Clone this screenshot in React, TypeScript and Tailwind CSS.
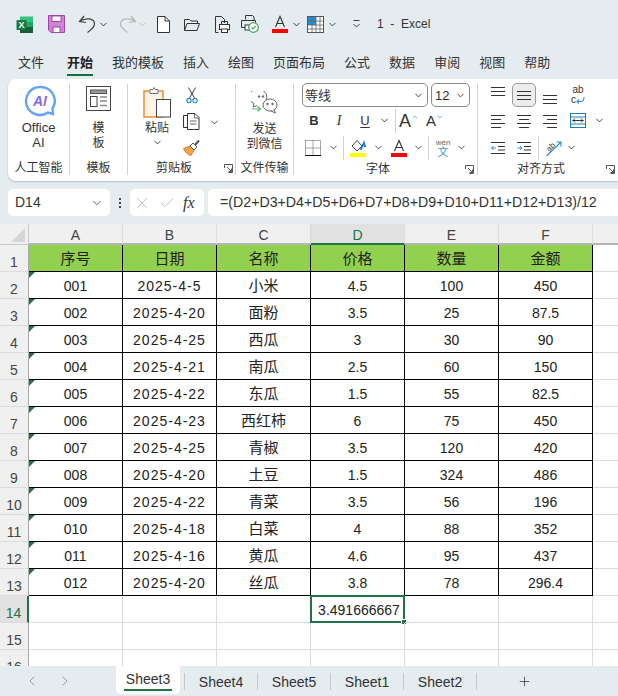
import React from 'react'
import { ChevronDown, ChevronLeft, ChevronRight, Plus, X, Check } from 'lucide-react'

const rows = [
  ['001', '2025-4-5', '小米', '4.5', '100', '450'],
  ['002', '2025-4-20', '面粉', '3.5', '25', '87.5'],
  ['003', '2025-4-25', '西瓜', '3', '30', '90'],
  ['004', '2025-4-21', '南瓜', '2.5', '60', '150'],
  ['005', '2025-4-22', '东瓜', '1.5', '55', '82.5'],
  ['006', '2025-4-23', '西红柿', '6', '75', '450'],
  ['007', '2025-4-25', '青椒', '3.5', '120', '420'],
  ['008', '2025-4-20', '土豆', '1.5', '324', '486'],
  ['009', '2025-4-22', '青菜', '3.5', '56', '196'],
  ['010', '2025-4-18', '白菜', '4', '88', '352'],
  ['011', '2025-4-16', '黄瓜', '4.6', '95', '437'],
  ['012', '2025-4-20', '丝瓜', '3.8', '78', '296.4'],
]
const heads = ['序号', '日期', '名称', '价格', '数量', '金额']
const tabs = ['开始', '我的模板', '插入', '绘图', '页面布局', '公式', '数据', '审阅', '视图', '帮助']

const Chev = ({ className = 'text-[#333]' }: { className?: string }) => (
  <ChevronDown size={11} strokeWidth={2} className={`shrink-0 ${className}`} />
)
const Sep = ({ className = 'h-[24px]' }: { className?: string }) => <div className={`w-px shrink-0 bg-[#d0d0d0] ${className}`} />
const Slot = ({ className, children }: { className: string; children?: React.ReactNode }) => (
  <div className={`flex h-full shrink-0 items-center justify-center ${className}`}>{children}</div>
)
const Divider = () => <div className="my-[5px] mb-[6px] w-px shrink-0 bg-[#d2d2d2]" />

const Launcher = () => (
  <svg width="9" height="9" viewBox="0 0 9 9" fill="none" stroke="#555" className="shrink-0">
    <path d="M.5 4V.5H8.5V8.5H4.5" />
    <path d="M3 3L7.5 7.5M7.5 4.5V7.5H4.5" />
  </svg>
)

const Lines = ({ ws, ys }: { ws: [number, number][]; ys: number[] }) => (
  <svg width="16" height="16" viewBox="0 0 16 16" stroke="#333" fill="none">
    {ys.map((y, i) => (
      <path key={i} d={`M${ws[i][0]} ${y + 0.5}H${ws[i][1]}`} />
    ))}
  </svg>
)

function TitleBar() {
  return (
    <div className="flex h-[45px] items-center pt-[3px]">
      <Slot className="ml-[15px] w-[18px]">
        <svg width="17" height="17" viewBox="0 0 17 17">
          <rect x="4" y="0.5" width="13" height="6" fill="#33c481" />
          <rect x="4" y="6" width="13" height="5.5" fill="#21a366" />
          <rect x="4" y="11" width="13" height="6" fill="#185c37" />
          <rect x="0.5" y="4" width="10" height="10" rx="1" fill="#107c41" />
          <text x="5.5" y="12" textAnchor="middle" fontSize="9" fontWeight="700" fill="#fff" fontFamily="Liberation Sans">X</text>
        </svg>
      </Slot>
      <Slot className="ml-[14px] w-[18px]">
        <svg width="17" height="18" viewBox="0 0 17 18">
          <path d="M.5.5H16.5V17.5H3L.5 15Z" fill="#cd84d4" stroke="#a144ad" />
          <rect x="4" y="1" width="9" height="5.5" fill="#fff" stroke="#a144ad" />
          <rect x="5" y="12" width="7" height="5.5" fill="#fff" stroke="#a144ad" />
        </svg>
      </Slot>
      <Slot className="ml-[13px] w-[20px]">
        <svg width="20" height="18" viewBox="0 0 20 18" fill="none" stroke="#444" strokeWidth="1.2">
          <path d="M6 1L1.5 6.5L8 7.5" />
          <path d="M1.5 6.5C7 2.5 16 3 16.5 8.5C16.8 12 13 15 9.5 17.5" />
        </svg>
      </Slot>
      <Slot className="ml-[0px] w-[10px]"><Chev /></Slot>
      <Slot className="ml-[9px] w-[20px]">
        <svg width="20" height="18" viewBox="0 0 20 18" fill="none" stroke="#b5b5b5" strokeWidth="1.2">
          <path d="M14 1L18.5 6.5L12 7.5" />
          <path d="M18.5 6.5C13 2.5 4 3 3.5 8.5C3.2 12 7 15 10.5 17.5" />
        </svg>
      </Slot>
      <Slot className="w-[10px]"><Chev className="text-[#bbb]" /></Slot>
      <Slot className="ml-[9px] w-[14px]">
        <svg width="13" height="17" viewBox="0 0 13 17" fill="#fff" stroke="#333">
          <path d="M.5.5H8L12.5 5V16.5H.5Z" />
          <path d="M8 .5V5H12.5" fill="none" />
        </svg>
      </Slot>
      <Slot className="ml-[13px] w-[17px]">
        <svg width="16" height="13" viewBox="0 0 16 13" fill="none" stroke="#333">
          <path d="M.5 12.5V1.5H5.5L7 3H13.5V5.5" />
          <path d="M.5 12.5L3 5.5H15.5L13 12.5Z" />
        </svg>
      </Slot>
      <Slot className="ml-[14px] w-[16px]">
        <svg width="15" height="17" viewBox="0 0 15 17" fill="none" stroke="#333">
          <path d="M.5 16.5V.5H6.5L9.5 3.5V7" />
          <path d="M3.5 16.5H.5" />
          <rect x="4.5" y="8.5" width="10" height="5" fill="#fff" />
          <rect x="6.5" y="13" width="6" height="3.5" fill="#fff" />
          <path d="M6.5 8.5V5.5H12.5V8.5" />
        </svg>
      </Slot>
      <Slot className="ml-[11px] w-[18px]">
        <svg width="18" height="18" viewBox="0 0 18 18" fill="none" stroke="#333">
          <path d="M4.5 4.5V.5H11.5L13 2V5" />
          <path d="M8 12.5H.5V5.5H14.5V7.5" />
          <rect x="4" y="10" width="5" height="5" fill="#fff" />
          <circle cx="12.5" cy="12.5" r="4.8" fill="#fff" stroke="#4aa564" strokeWidth="1.3" />
          <path d="M10.5 12.5L12 14L14.7 11" stroke="#4aa564" strokeWidth="1.2" />
        </svg>
      </Slot>
      <Slot className="ml-[13px] w-[16px]">
        <svg width="16" height="18" viewBox="0 0 16 18" fill="none">
          <path d="M3.5 12L8 1.5L12.5 12M5 8.5H11" stroke="#333" strokeWidth="1.1" />
          <rect y="14" width="16" height="4" fill="#f00" />
        </svg>
      </Slot>
      <Slot className="ml-[3px] w-[10px]"><Chev /></Slot>
      <Slot className="ml-[6px] w-[17px]">
        <svg width="17" height="17" viewBox="0 0 17 17" fill="none">
          <rect x="0.5" y="0.5" width="16" height="16" fill="#fff" stroke="#555" />
          <rect x="1" y="1" width="8" height="8" fill="#1e8fdc" />
          <path d="M1 5H16M1 9H16M1 13H16M5 1V16M9 1V16M13 1V16" stroke="#666" strokeWidth="0.8" />
        </svg>
      </Slot>
      <Slot className="ml-[3px] w-[10px]"><Chev /></Slot>
      <Slot className="ml-[13px] w-[12px]">
        <svg width="9" height="8" viewBox="0 0 9 8" fill="none" stroke="#444">
          <path d="M1.5 .5H7.5M1.5 4L4.5 7L7.5 4" />
        </svg>
      </Slot>
      <span className="ml-[15px] whitespace-pre text-[12px] text-[#333]">1  -  Excel</span>
    </div>
  )
}

function TabBar() {
  return (
    <div className="flex h-[34px] pl-[18px] text-[13px] text-[#333]">
      <div className="mt-[4px] flex h-[27px] flex-col justify-center border-b-[2px] border-transparent pt-[2px]">文件</div>
      <div className="ml-[23px] flex gap-[19px]">
        {tabs.map((t) => (
          <div key={t} className={`mt-[4px] flex h-[27px] flex-col justify-center pt-[2px] ${t === '开始' ? 'border-b-[2px] border-[#116f3f] font-bold text-[#222]' : 'border-b-[2px] border-transparent'}`}>
            {t}
          </div>
        ))}
      </div>
    </div>
  )
}

const GroupLabel = ({ children }: { children: React.ReactNode }) => (
  <div className="flex h-[17px] items-center justify-center text-[12px] text-[#333]">{children}</div>
)

function Ribbon() {
  return (
    <div className="ml-[8px] flex h-[102px] rounded-l-[8px] bg-white text-[12px] leading-[15px] text-[#333] shadow-[0_1px_2px_rgba(0,0,0,0.2)]">
      <div className="flex w-[61px] shrink-0 flex-col">
        <div className="flex h-[81px] flex-col items-center pt-[6px]">
          <svg width="32" height="33" viewBox="0 0 32 33" fill="none" className="ml-[3px]">
            <defs>
              <linearGradient id="ai" x1="0" y1="0" x2="1" y2="1">
                <stop offset="0" stopColor="#4f7cff" />
                <stop offset="0.6" stopColor="#8a63e8" />
                <stop offset="1" stopColor="#f2a63c" />
              </linearGradient>
            </defs>
            <path d="M16 2A14 14 0 1 0 24 27.5L29 29L28.5 23.5A14 14 0 0 0 16 2Z" stroke="#64a4f4" strokeWidth="2.4" />
            <text x="16" y="21" textAnchor="middle" fontSize="14" fontWeight="700" fontStyle="italic" fill="url(#ai)" fontFamily="Liberation Sans">AI</text>
          </svg>
          <div className="mt-[2px] text-center text-[13px]">Office<br />AI</div>
        </div>
        <GroupLabel>人工智能</GroupLabel>
      </div>
      <Divider />
      <div className="flex w-[57px] shrink-0 flex-col">
        <div className="flex h-[81px] flex-col items-center pt-[7px]">
          <svg width="25" height="25" viewBox="0 0 25 25" fill="none" stroke="#444">
            <rect x="0.5" y="0.5" width="24" height="24" />
            <rect x="4.5" y="4" width="16" height="3.5" fill="#999" stroke="#555" />
            <rect x="4.5" y="10.5" width="6.5" height="10" />
            <path d="M14 11H21M14 15H21M14 19.5H21" stroke="#888" strokeWidth="1.5" />
          </svg>
          <div className="mt-[10px] text-center">模<br />板</div>
        </div>
        <GroupLabel>模板</GroupLabel>
      </div>
      <Divider />
      <div className="flex w-[107px] shrink-0 flex-col">
        <div className="flex h-[81px]">
          <div className="ml-[13px] flex w-[32px] flex-col items-center pt-[8px]">
            <svg width="29" height="31" viewBox="0 0 29 31" fill="none">
              <rect x="1" y="4" width="19" height="26" fill="#fdf3e6" stroke="#ee8c2c" strokeWidth="1.5" />
              <path d="M7 4.5V2.5H10L11 .5L12 2.5H15V6.5H7Z" fill="#fff" stroke="#777" />
              <rect x="13.5" y="12.5" width="14" height="17.5" fill="#fff" stroke="#444" />
            </svg>
            <div className="mt-[3px] whitespace-nowrap">粘贴</div>
            <div className="mt-[1px]"><Chev /></div>
          </div>
          <div className="ml-[10px] flex flex-col items-center pt-[8px]">
            <svg width="12" height="17" viewBox="0 0 12 17" fill="none" stroke="#444">
              <path d="M2.5 .5L8.5 11M9.5 .5L3.5 11" />
              <circle cx="3" cy="13.5" r="2.2" stroke="#2c8fd8" strokeWidth="1.2" />
              <circle cx="9" cy="13.5" r="2.2" stroke="#2c8fd8" strokeWidth="1.2" />
            </svg>
            <svg width="17" height="17" viewBox="0 0 17 17" fill="none" stroke="#333" className="mt-[9px]">
              <path d="M4.5 2.5H.5V14.5H4.5" />
              <path d="M4.5 .5H12L16 4.5V16.5H4.5Z" fill="#fff" />
              <path d="M7 8H13.5M7 11H13.5M11.5 .5V5H16" stroke="#666" />
            </svg>
            <svg width="17" height="17" viewBox="0 0 17 17" fill="none" className="mt-[9px]">
              <path d="M.5 9.5L7 7L11 11L8 16.5C5 16 2 13 .5 9.5Z" fill="#f5a24e" stroke="#e07c20" />
              <path d="M7 7L10 4L14 8L11 11Z" fill="#fff" stroke="#555" />
              <path d="M12 6L16 1.5" stroke="#555" strokeWidth="2" />
            </svg>
          </div>
          <div className="ml-[9px] mt-[38px]"><Chev /></div>
        </div>
        <div className="flex h-[17px] items-center pl-[28px] pr-[2px] text-[12px]">
          <span>剪贴板</span>
          <span className="ml-auto"><Launcher /></span>
        </div>
      </div>
      <Divider />
      <div className="flex w-[57px] shrink-0 flex-col">
        <div className="flex h-[81px] flex-col items-center pt-[12px]">
          <svg width="27" height="23" viewBox="0 0 27 23" fill="none" stroke="#666">
            <path d="M3 12.5A9 7.5 0 1 1 15 9" />
            <path d="M3 12.5L2 16L6 14.5" />
            <circle cx="8" cy="5.5" r="0.8" fill="#555" />
            <circle cx="12" cy="5.5" r="0.8" fill="#555" />
            <ellipse cx="19" cy="14" rx="7" ry="6" fill="#fff" />
            <path d="M23 19L24.5 22L20 20" fill="#fff" />
            <circle cx="16.5" cy="13" r="0.8" fill="#555" />
            <circle cx="21.5" cy="13" r="0.8" fill="#555" />
            <path d="M1 18H9M6.5 15.5L9.5 18L6.5 20.5" stroke="#5cb57a" strokeWidth="1.2" />
          </svg>
          <div className="mt-[8px] text-center whitespace-nowrap">发送<br />到微信</div>
        </div>
        <GroupLabel>文件传输</GroupLabel>
      </div>
      <Divider />
      <FontGroup />
      <Divider />
      <AlignGroup />
    </div>
  )
}

function FontGroup() {
  return (
    <div className="flex w-[183px] shrink-0 flex-col pl-[8px]">
      <div className="mt-[4px] flex h-[24px] gap-[3px]">
        <div className="flex w-[126px] items-center justify-between rounded-[5px] border border-[#8a8a8a] pl-[2px] pr-[3px] text-[13px]">
          等线 <Chev />
        </div>
        <div className="flex w-[39px] items-center justify-between rounded-[5px] border border-[#8a8a8a] pl-[3px] pr-[3px] text-[13px]">
          12 <Chev />
        </div>
      </div>
      <div className="flex h-[27px] items-center">
        <Slot className="w-[24px] text-[13px] font-bold">B</Slot>
        <Slot className="w-[26px] font-['Liberation_Serif'] text-[14px] italic">I</Slot>
        <Slot className="w-[26px] text-[13px] underline underline-offset-2">U</Slot>
        <Slot className="w-[12px]"><Chev /></Slot>
        <Sep className="ml-[5px] h-[24px]" />
        <Slot className="w-[26px]">
          <span className="text-[18px] leading-none text-[#333]">A</span>
          <ChevronDown size={8} strokeWidth={2} className="mb-[8px] rotate-180 text-[#2c8fd8]" />
        </Slot>
        <Slot className="w-[26px]">
          <span className="text-[15px] leading-none">A</span>
          <ChevronDown size={8} strokeWidth={2} className="mb-[8px] text-[#2c8fd8]" />
        </Slot>
      </div>
      <div className="flex h-[27px] items-center">
        <Slot className="w-[22px]">
          <svg width="16" height="16" viewBox="0 0 16 16" fill="none">
            <path d="M.5 .5H15.5V15.5M.5 .5V15.5M8 .5V15.5M.5 8H15.5" stroke="#555" strokeDasharray="1 1" />
            <path d="M0 15.5H16" stroke="#111" />
          </svg>
        </Slot>
        <Slot className="w-[19px]"><Chev /></Slot>
        <Sep />
        <Slot className="w-[28px]">
          <svg width="17" height="18" viewBox="0 0 17 18" fill="none">
            <path d="M2 7L7 1.5L12 7L7 12Z" stroke="#444" />
            <path d="M11 11C11 8 13 6 14 4L15 8" stroke="#1e7fcc" strokeWidth="2" />
            <rect y="14" width="16" height="4" fill="#ff0" />
          </svg>
        </Slot>
        <Slot className="w-[12px]"><Chev /></Slot>
        <Slot className="w-[30px]">
          <svg width="16" height="18" viewBox="0 0 16 18" fill="none">
            <path d="M3.5 12L8 1.5L12.5 12M5 8.5H11" stroke="#333" strokeWidth="1.1" />
            <rect y="14" width="16" height="4" fill="#f00" />
          </svg>
        </Slot>
        <Slot className="w-[8px]"><Chev /></Slot>
        <Sep className="ml-[6px] h-[24px]" />
        <Slot className="w-[28px] flex-col">
          <span className="text-[8px] leading-[9px] text-[#666]">wén</span>
          <span className="text-[11px] leading-[11px] text-[#3a9ad9]">文</span>
        </Slot>
        <Slot className="w-[8px]"><Chev /></Slot>
      </div>
      <div className="flex h-[17px] items-center pr-[3px] text-[12px]">
        <span className="ml-[64px]">字体</span>
        <span className="ml-auto"><Launcher /></span>
      </div>
    </div>
  )
}

function AlignGroup() {
  const left: [number, number][] = [[1, 15], [1, 11], [1, 15], [1, 11]]
  const center: [number, number][] = [[1, 15], [3, 13], [1, 15], [3, 13]]
  const right: [number, number][] = [[1, 15], [5, 15], [1, 15], [5, 15]]
  const three: [number, number][] = [[1, 15], [1, 15], [1, 15]]
  return (
    <div className="flex flex-1 flex-col pl-[6px]">
      <div className="mt-[4px] flex h-[24px] items-center">
        <Slot className="w-[28px] items-start pt-[1px]"><Lines ws={three} ys={[3, 7, 11]} /></Slot>
        <div className="flex h-[24px] w-[24px] shrink-0 items-center justify-center rounded-[5px] border border-[#9a9a9a] bg-[#ececec]">
          <Lines ws={three} ys={[4, 8, 12]} />
        </div>
        <Slot className="w-[28px] items-end pb-[1px]"><Lines ws={three} ys={[5, 9, 13]} /></Slot>
        <Slot className="w-[28px] flex-col">
          <span className="text-[10px] leading-[10px] text-[#333]">ab</span>
          <span className="flex items-center text-[10px] leading-[10px] text-[#333]">c
            <svg width="9" height="9" viewBox="0 0 9 9" fill="none" stroke="#2c8fd8" strokeWidth="1.1">
              <path d="M8 1C8 4 7 5.5 5 5.5H1M3 3.5L1 5.5L3 7.5" />
            </svg>
          </span>
        </Slot>
      </div>
      <div className="flex h-[27px] items-center">
        <Slot className="w-[28px]"><Lines ws={left} ys={[2, 6, 10, 14]} /></Slot>
        <Slot className="w-[24px]"><Lines ws={center} ys={[2, 6, 10, 14]} /></Slot>
        <Slot className="w-[28px]"><Lines ws={right} ys={[2, 6, 10, 14]} /></Slot>
        <Slot className="w-[28px]">
          <svg width="16" height="15" viewBox="0 0 16 15" fill="none" stroke="#1e7fb8">
            <rect x="0.5" y="0.5" width="15" height="14" />
            <path d="M.5 4H15.5M.5 11H15.5" />
            <path d="M2.5 7.5H13.5M5 5.5L3 7.5L5 9.5M11 5.5L13 7.5L11 9.5" stroke="#333" />
          </svg>
        </Slot>
        <Slot className="w-[14px]"><Chev /></Slot>
      </div>
      <div className="flex h-[27px] items-center">
        <Slot className="w-[28px]">
          <svg width="16" height="16" viewBox="0 0 16 16" fill="none" stroke="#333">
            <path d="M1 2.5H15M8 6.5H15M8 10H15M1 13.5H15" />
            <path d="M6 8H1.5M3.5 6L1.5 8L3.5 10" stroke="#2c8fd8" />
          </svg>
        </Slot>
        <Slot className="w-[24px]">
          <svg width="16" height="16" viewBox="0 0 16 16" fill="none" stroke="#333">
            <path d="M1 2.5H15M8 6.5H15M8 10H15M1 13.5H15" />
            <path d="M1.5 8H6M4 6L6 8L4 10" stroke="#2c8fd8" />
          </svg>
        </Slot>
        <Sep className="ml-[2px] h-[24px]" />
        <Slot className="w-[29px]">
          <svg width="19" height="18" viewBox="0 0 19 18" fill="none">
            <text x="2" y="11" fontSize="8" fill="#333" transform="rotate(-45 6 8)" fontFamily="Liberation Sans">ab</text>
            <path d="M2.5 17L17 3M12.5 3H17V7.5" stroke="#2c8fd8" strokeWidth="1.2" />
          </svg>
        </Slot>
        <Slot className="w-[6px]"><Chev /></Slot>
      </div>
      <div className="flex h-[17px] items-center pr-[3px] text-[12px]">
        <span className="ml-[33px]">对齐方式</span>
        <span className="ml-auto"><Launcher /></span>
      </div>
    </div>
  )
}

function FormulaBar() {
  return (
    <div className="mt-[7px] flex h-[30px] items-stretch pl-[8px] pb-[2px] pt-px text-[#333]">
      <div className="flex w-[102px] items-center justify-between rounded-[5px] bg-white pl-[7px] pr-[6px] text-[14px]">
        D14 <ChevronDown size={14} strokeWidth={1.5} className="text-[#555]" />
      </div>
      <div className="flex w-[20px] flex-col items-center justify-center gap-[2px]">
        <i className="h-[2px] w-[2px] bg-[#444]" />
        <i className="h-[2px] w-[2px] bg-[#444]" />
        <i className="h-[2px] w-[2px] bg-[#444]" />
      </div>
      <div className="flex w-[74px] items-center rounded-[5px] bg-white pl-[3px]">
        <X size={18} strokeWidth={1} className="text-[#aaa]" />
        <Check size={18} strokeWidth={1} className="ml-[7px] text-[#aaa]" />
        <span className="ml-[7px] font-['Liberation_Serif'] text-[16px] italic text-[#333]">fx</span>
      </div>
      <div className="ml-[4px] flex flex-1 items-center rounded-l-[5px] bg-white pl-[12px] text-[14.2px] whitespace-nowrap">
        =(D2+D3+D4+D5+D6+D7+D8+D9+D10+D11+D12+D13)/12
      </div>
    </div>
  )
}

function Sheet() {
  const cols = ['A', 'B', 'C', 'D', 'E', 'F']
  return (
    <div className="mt-[6px] h-[442px] overflow-hidden bg-white text-[14px] text-[#222]">
      <div className="flex h-[21px]">
        <div className="flex w-[29px] shrink-0 items-end justify-end border-r border-b border-[#c8c8c8] bg-[#f0f0f0] pb-[2px] pr-[3px]">
          <div className="h-0 w-0 border-b-[14px] border-l-[14px] border-b-[#d6d6d6] border-l-transparent" />
        </div>
        {cols.map((c) => (
          <div
            key={c}
            className={`flex w-[94px] shrink-0 items-center justify-center border-r border-[#dcdcdc] pt-[4px] text-[#444] ${c === 'D' ? 'border-b-2 border-b-[#217346] bg-[#e1e1e1] text-[#217346]' : 'border-b-2 border-b-[#b5b5b5] bg-[#f0f0f0]'}`}
          >
            {c}
          </div>
        ))}
        <div className="flex-1 border-b-2 border-b-[#b5b5b5] bg-[#f0f0f0]" />
      </div>
      <Row n={1} green cells={heads} />
      {rows.map((r, i) => (
        <Row key={r[0]} n={i + 2} cells={r} />
      ))}
      <EmptyRow n={14} selected />
      <EmptyRow n={15} />
      <EmptyRow n={16} />
    </div>
  )
}

const RowHead = ({ n, selected }: { n: number; selected?: boolean }) => (
  <div
    className={`flex h-full w-[29px] shrink-0 items-end justify-center border-b border-[#dcdcdc] pb-px leading-[16px] ${selected ? 'border-r-2 border-r-[#217346] bg-[#e1e1e1] text-[#217346]' : 'border-r border-r-[#a8a8a8] bg-[#f0f0f0] text-[#444]'}`}
  >
    {n}
  </div>
)

function Row({ n, cells, green }: { n: number; cells: string[]; green?: boolean }) {
  return (
    <div className="flex h-[27px]">
      <RowHead n={n} />
      {cells.map((c, i) => (
        <div
          key={i}
          className={`relative flex w-[94px] shrink-0 items-center justify-center border-r border-b border-black pt-[2px] ${green ? 'bg-[#92d050]' : 'bg-white'} ${i === 1 && !green ? 'tracking-[1px]' : ''} ${green || i === 2 ? 'text-[15px]' : ''}`}
        >
          {i === 0 && !green && (
            <span className="absolute top-0 left-0 h-0 w-0 border-t-[6px] border-r-[6px] border-t-[#217346] border-r-transparent" />
          )}
          {c}
        </div>
      ))}
      <div className="flex-1 border-b border-[#dcdcdc]" />
    </div>
  )
}

function EmptyRow({ n, selected }: { n: number; selected?: boolean }) {
  return (
    <div className="flex h-[27px]">
      <RowHead n={n} selected={selected} />
      {[0, 1, 2, 3, 4, 5].map((i) => (
        <div key={i} className="relative flex w-[94px] shrink-0 items-center justify-center border-r border-b border-[#dcdcdc] pt-[2px] pl-[3px]">
          {selected && i === 3 && (
            <>
              <div className="absolute -top-px -left-px h-[28px] w-[95px] border-2 border-[#217346]" />
              <span className="absolute -right-[3px] -bottom-[3px] h-[6px] w-[6px] border border-white bg-[#217346]" />
              3.491666667
            </>
          )}
        </div>
      ))}
      <div className="flex-1 border-b border-[#dcdcdc]" />
    </div>
  )
}

function SheetTabs() {
  return (
    <div className="flex h-[30px] items-center bg-[#e5ecf0] text-[14px] text-[#333]">
      <ChevronLeft size={16} strokeWidth={1.5} className="ml-[24px] text-[#999]" />
      <ChevronRight size={16} strokeWidth={1.5} className="ml-[17px] text-[#999]" />
      <div className="mb-[2px] ml-[43px] flex h-[28px] w-[64px] flex-col items-center rounded-b-[5px] bg-white pt-[3px]">
        <span className="leading-[20px]">Sheet3</span>
        <i className="h-[2px] w-[48px] bg-[#217346]" />
      </div>
      <div className="ml-[4px] h-[17px] w-px bg-[#c8c8c8]" />
      {['Sheet4', 'Sheet5', 'Sheet1', 'Sheet2'].map((s) => (
        <React.Fragment key={s}>
          <span className="w-[72px] pt-[1px] text-center leading-[20px]">{s}</span>
          <div className="h-[17px] w-px bg-[#c8c8c8]" />
        </React.Fragment>
      ))}
      <Plus size={15} strokeWidth={1.2} className="ml-[40px]" />
    </div>
  )
}

export default function App() {
  return (
    <div className="flex h-[696px] w-[618px] flex-col overflow-hidden bg-[#e5ecf0] font-['Liberation_Sans','Noto_Sans_CJK_SC',sans-serif]">
      <TitleBar />
      <TabBar />
      <Ribbon />
      <FormulaBar />
      <Sheet />
      <SheetTabs />
    </div>
  )
}
